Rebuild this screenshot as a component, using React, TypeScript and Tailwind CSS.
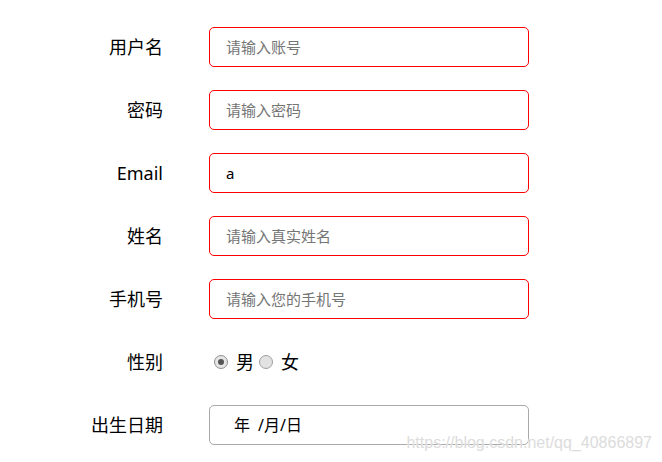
import React from "react";

const font = { fontFamily: '"Noto Sans", "Noto Sans CJK SC", sans-serif' };

function Row({ label, children }: { label: string; children: React.ReactNode }) {
  return (
    <div className="flex h-[40px] items-center">
      <div className="w-[80px] text-right text-[18px] leading-none text-black">{label}</div>
      <div className="ml-[46px] flex items-center">{children}</div>
    </div>
  );
}

function TextBox({ placeholder, value }: { placeholder: string; value?: string }) {
  return (
    <input
      readOnly
      value={value ?? ""}
      placeholder={placeholder}
      className="box-border h-[40px] w-[320px] rounded-[5px] border border-[#ff0000] bg-white pl-[16px] text-[15px] text-black outline-none placeholder:text-[#757575]"
      style={font}
    />
  );
}

export default function App() {
  return (
    <div className="relative h-[462px] w-[662px] overflow-hidden bg-white" style={font}>
      <div className="flex flex-col gap-[23px] pl-[83px] pt-[27px]">
        <Row label="用户名">
          <TextBox placeholder="请输入账号" />
        </Row>
        <Row label="密码">
          <TextBox placeholder="请输入密码" />
        </Row>
        <Row label="Email">
          <TextBox placeholder="" value="a" />
        </Row>
        <Row label="姓名">
          <TextBox placeholder="请输入真实姓名" />
        </Row>
        <Row label="手机号">
          <TextBox placeholder="请输入您的手机号" />
        </Row>
        <Row label="性别">
          <div className="flex items-center pl-[5px] text-[18px] leading-none text-black">
            <span className="flex h-[14px] w-[14px] items-center justify-center rounded-full border border-[#8f8f8f] bg-[#e6e6e6]">
              <span className="h-[6px] w-[6px] rounded-full bg-[#555]" />
            </span>
            <span className="ml-[8px]">男</span>
            <span className="ml-[5px] h-[14px] w-[14px] rounded-full border border-[#a0a0a0] bg-[#e2e2e2]" />
            <span className="ml-[8px]">女</span>
          </div>
        </Row>
        <Row label="出生日期">
          <div className="box-border flex h-[40px] w-[320px] items-center rounded-[5px] border border-[#a9a9a9] bg-white pl-[24px] text-[16px] text-black">
            <span>年</span>
            <span className="ml-[8px]">/</span>
            <span>月</span>
            <span>/</span>
            <span>日</span>
          </div>
        </Row>
      </div>
      <div
        className="absolute bottom-[11px] right-[10px] text-[16px] leading-none text-[#dcdcdc]"
        style={{ fontFamily: '"Liberation Sans", Arial, sans-serif', textShadow: "0 0 1px #fff" }}
      >
        https://blog.csdn.net/qq_40866897
      </div>
    </div>
  );
}
